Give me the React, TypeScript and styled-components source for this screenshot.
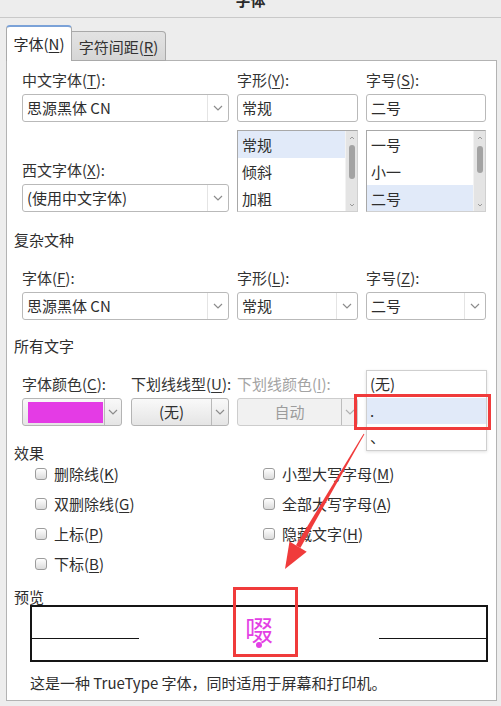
import React from "react";
import styled, { createGlobalStyle } from "styled-components";

const GlobalStyle = createGlobalStyle`
  html, body { margin: 0; padding: 0; }
  body {
    width: 501px; height: 706px; overflow: hidden; background: #ededed;
    font-family: "Noto Sans CJK SC", "Noto Sans", sans-serif;
    font-size: 15px; color: #333;
  }
  * { box-sizing: border-box; }
`;

const Page = styled.div`
  position: relative; width: 501px; height: 706px; overflow: hidden; background: #ededed;
`;

const TitleBar = styled.div`
  height: 18px; border-bottom: 1px solid #c9c9c9; display: flex; justify-content: center;
  align-items: flex-start; overflow: hidden;
`;
const TitleText = styled.div`
  font-weight: 700; font-size: 15px; line-height: 20px; margin-top: -10px; color: #2a2a2a;
`;

const TabBar = styled.div`
  display: flex; align-items: flex-end; margin-top: 7px; padding-left: 6px; height: 36px;
  position: relative; z-index: 1;
`;
const Tab = styled.div<{ $active?: boolean }>`
  display: flex; align-items: center; justify-content: center; white-space: nowrap;
  border: 1px solid #a9a9a9;
  ${(p) =>
    p.$active
      ? `height: 36px; width: 66px; background: #fff; border-bottom: none; border-top: 2px solid #7ba2d8;
         border-radius: 4px 4px 0 0; color: #2a2a2a; padding-bottom: 1px;`
      : `height: 30px; width: 94px; background: linear-gradient(#e3e3e3, #d6d6d6); border-left: none;
         border-radius: 0 4px 0 0; color: #333;`}
`;

const Panel = styled.div`
  margin-left: 6px; margin-top: -1px; width: 491px; height: 641px; background: #fff;
  border: 1px solid #b3b3b3; padding: 9px 0 0 7px;
`;

const SectionHeading = styled.div<{ $mt: number; $lh?: number }>`
  margin-top: ${(p) => p.$mt}px; line-height: ${(p) => p.$lh ?? 20}px; color: #2e2e2e;
`;

const FieldGrid = styled.div<{ $mt?: number }>`
  display: grid; grid-template-columns: 207px 121px 120px; column-gap: 8px;
  margin-left: 8px; margin-top: ${(p) => p.$mt ?? 0}px;
`;

const Column = styled.div`
  display: flex; flex-direction: column; position: relative;
`;

const Label = styled.div<{ $mt?: number; $disabled?: boolean }>`
  line-height: 20px; height: 20px; margin-bottom: 4px; white-space: nowrap;
  margin-top: ${(p) => p.$mt ?? 0}px; color: ${(p) => (p.$disabled ? "#a3a3a3" : "#333")};
`;

const Key = styled.span`
  text-decoration: underline; text-underline-offset: 2px; text-decoration-thickness: 1px;
`;

const Combo = styled.div`
  height: 28px; border: 1px solid #b9b9b9; border-radius: 3px; background: #fff;
  display: flex; align-items: stretch;
`;
const ComboText = styled.div`
  flex: 1; padding-left: 4px; line-height: 26px; white-space: nowrap; overflow: hidden; color: #2e2e2e;
`;
const ComboArrow = styled.div<{ $w?: number; $line?: string }>`
  width: ${(p) => p.$w ?? 21}px; display: flex; align-items: center; justify-content: center;
  border-left: 1px solid ${(p) => p.$line ?? "#e4e4e4"};
`;

const TextBox = styled.div`
  height: 28px; border: 1px solid #b9b9b9; border-radius: 3px; background: #fff;
  padding-left: 4px; line-height: 26px; color: #2e2e2e;
`;

const List = styled.div`
  margin-top: 8px; height: 82px; display: flex; border: 1px solid #a8a8a8;
  border-right-color: #d0d0d0; border-bottom-color: #d0d0d0; background: #fff; overflow: hidden;
`;
const ListItems = styled.div`
  flex: 1; display: flex; flex-direction: column;
`;
const ListItem = styled.div<{ $sel?: boolean }>`
  height: 27px; flex: none; line-height: 27px; padding-left: 4px; color: #2e2e2e;
  background: ${(p) => (p.$sel ? "#e1eaf9" : "transparent")};
`;
const ScrollTrack = styled.div`
  width: 12px; background: #e4e4e4; border-left: 1px solid #f2f2f2; display: flex; flex-direction: column;
  align-items: center; justify-content: space-between; padding: 5px 0 4px;
`;
const ScrollThumb = styled.div<{ $top: number; $h: number }>`
  width: 6px; height: ${(p) => p.$h}px; border-radius: 3px; background: #a3a3a3;
  margin-top: ${(p) => p.$top}px; margin-bottom: auto;
`;

const ButtonRow = styled.div`
  display: flex; gap: 9px;
`;
const SubField = styled.div<{ $w: number }>`
  width: ${(p) => p.$w}px; display: flex; flex-direction: column;
`;
const DropButton = styled.div<{ $disabled?: boolean }>`
  height: 28px; border: 1px solid ${(p) => (p.$disabled ? "#cdcdcd" : "#b4b4b4")}; border-radius: 3px;
  background: ${(p) => (p.$disabled ? "#f1f1f1" : "linear-gradient(#f9f9f9, #e5e5e5)")};
  display: flex; align-items: stretch;
`;
const ButtonFace = styled.div<{ $disabled?: boolean }>`
  flex: 1; display: flex; align-items: center; justify-content: center; line-height: 26px;
  color: ${(p) => (p.$disabled ? "#9c9c9c" : "#2e2e2e")};
`;
const Swatch = styled.div<{ $color: string }>`
  flex: 1; margin: 3px 1px 2px 5px; background: ${(p) => p.$color};
`;

const Popup = styled.div`
  position: absolute; top: -4px; left: 0; width: 121px; height: 81px; background: #fff;
  border: 1px solid #cfcfcf; box-shadow: 0 1px 3px rgba(0,0,0,0.12); z-index: 2;
`;
const PopupItem = styled.div<{ $sel?: boolean }>`
  height: 26.5px; line-height: 26px; padding-left: 3px; color: #2e2e2e;
  background: ${(p) => (p.$sel ? "#e1eaf9" : "transparent")};
`;

const CheckGrid = styled.div`
  display: grid; grid-template-columns: 228px 1fr; grid-auto-rows: 22px; row-gap: 8px;
  padding-left: 21px;
`;
const CheckRow = styled.div`
  display: flex; align-items: center; gap: 7px; white-space: nowrap; color: #2e2e2e;
`;
const CheckBox = styled.div`
  width: 12px; height: 12px; border: 1px solid #9c9c9c; border-radius: 3px;
  background: linear-gradient(#ffffff, #dcdcdc);
`;
const CheckText = styled.span`
  line-height: 22px;
`;

const PreviewBox = styled.div`
  margin-left: 16px; width: 458px; height: 57px; border: 2px solid #151515; display: flex;
`;
const BaseLine = styled.div`
  width: 107px; height: 0; border-top: 1.5px solid #151515; margin-top: 31px; flex: none;
`;
const PreviewCenter = styled.div`
  flex: 1; display: flex; justify-content: center; align-items: flex-start;
`;
const PreviewGlyph = styled.span`
  position: relative; font-size: 28px; line-height: 32px; margin-top: 6px; color: #e340e4;
  &::after {
    content: ""; position: absolute; left: 11px; bottom: -3px; width: 6px; height: 6px;
    border-radius: 50%; background: #e340e4;
  }
`;

const Footer = styled.div`
  margin-top: 11px; margin-left: 16px; line-height: 20px; color: #2e2e2e; white-space: nowrap;
`;

const Overlay = styled.svg`
  position: absolute; top: 0; left: 0; pointer-events: none; z-index: 5;
`;

const Chevron = ({ color = "#8c8c8c" }: { color?: string }) => (
  <svg width="10" height="6" viewBox="0 0 10 6">
    <path d="M1 1 L5 5 L9 1" fill="none" stroke={color} strokeWidth="1.2" />
  </svg>
);

const SmallArrow = ({ up }: { up?: boolean }) => (
  <svg width="6" height="4" viewBox="0 0 6 4">
    <path d={up ? "M1 3 L3 1 L5 3" : "M1 1 L3 3 L5 1"} fill="none" stroke="#9a9a9a" strokeWidth="1" />
  </svg>
);

const ComboField = ({ text }: { text: string }) => (
  <Combo>
    <ComboText>{text}</ComboText>
    <ComboArrow>
      <Chevron />
    </ComboArrow>
  </Combo>
);

const ListBox = ({ items, sel, thumbTop, thumbH }: { items: string[]; sel: number; thumbTop: number; thumbH: number }) => (
  <List>
    <ListItems>
      {items.map((t, i) => (
        <ListItem key={t} $sel={i === sel}>{t}</ListItem>
      ))}
    </ListItems>
    <ScrollTrack>
      <SmallArrow up />
      <ScrollThumb $top={thumbTop} $h={thumbH} />
      <SmallArrow />
    </ScrollTrack>
  </List>
);

const Check = ({ text, k }: { text: string; k: string }) => (
  <CheckRow>
    <CheckBox />
    <CheckText>
      {text}(<Key>{k}</Key>)
    </CheckText>
  </CheckRow>
);

export default function App() {
  return (
    <Page>
      <GlobalStyle />
      <TitleBar>
        <TitleText>字体</TitleText>
      </TitleBar>
      <TabBar>
        <Tab $active><span>字体(<Key>N</Key>)</span></Tab>
        <Tab><span>字符间距(<Key>R</Key>)</span></Tab>
      </TabBar>
      <Panel>
        <FieldGrid>
          <Column>
            <Label>中文字体(<Key>T</Key>):</Label>
            <ComboField text="思源黑体 CN" />
            <Label $mt={38}>西文字体(<Key>X</Key>):</Label>
            <ComboField text="(使用中文字体)" />
          </Column>
          <Column>
            <Label>字形(<Key>Y</Key>):</Label>
            <TextBox>常规</TextBox>
            <ListBox items={["常规", "倾斜", "加粗"]} sel={0} thumbTop={5} thumbH={34} />
          </Column>
          <Column>
            <Label>字号(<Key>S</Key>):</Label>
            <TextBox>二号</TextBox>
            <ListBox items={["一号", "小一", "二号"]} sel={2} thumbTop={6} thumbH={27} />
          </Column>
        </FieldGrid>

        <SectionHeading $mt={18}>复杂文种</SectionHeading>
        <FieldGrid $mt={18}>
          <Column>
            <Label>字体(<Key>F</Key>):</Label>
            <ComboField text="思源黑体 CN" />
          </Column>
          <Column>
            <Label>字形(<Key>L</Key>):</Label>
            <ComboField text="常规" />
          </Column>
          <Column>
            <Label>字号(<Key>Z</Key>):</Label>
            <ComboField text="二号" />
          </Column>
        </FieldGrid>

        <SectionHeading $mt={16}>所有文字</SectionHeading>
        <FieldGrid $mt={18}>
          <Column>
            <ButtonRow>
              <SubField $w={100}>
                <Label>字体颜色(<Key>C</Key>):</Label>
                <DropButton>
                  <Swatch $color="#e43be5" />
                  <ComboArrow $w={17} $line="#b9b9b9">
                    <Chevron />
                  </ComboArrow>
                </DropButton>
              </SubField>
              <SubField $w={98}>
                <Label>下划线线型(<Key>U</Key>):</Label>
                <DropButton>
                  <ButtonFace>(无)</ButtonFace>
                  <ComboArrow $w={17} $line="#b9b9b9">
                    <Chevron />
                  </ComboArrow>
                </DropButton>
              </SubField>
            </ButtonRow>
          </Column>
          <Column>
            <Label $disabled>下划线颜色(<Key>I</Key>):</Label>
            <DropButton $disabled>
              <ButtonFace $disabled>自动</ButtonFace>
              <ComboArrow $w={16} $line="#bdbdbd">
                <Chevron color="#b0b0b0" />
              </ComboArrow>
            </DropButton>
          </Column>
          <Column>
            <Popup>
              <PopupItem>(无)</PopupItem>
              <PopupItem $sel>.</PopupItem>
              <PopupItem>、</PopupItem>
            </Popup>
          </Column>
        </FieldGrid>

        <SectionHeading $mt={17}>效果</SectionHeading>
        <CheckGrid>
          <Check text="删除线" k="K" />
          <Check text="小型大写字母" k="M" />
          <Check text="双删除线" k="G" />
          <Check text="全部大写字母" k="A" />
          <Check text="上标" k="P" />
          <Check text="隐藏文字" k="H" />
          <Check text="下标" k="B" />
        </CheckGrid>

        <SectionHeading $mt={14} $lh={16}>预览</SectionHeading>
        <PreviewBox>
          <BaseLine />
          <PreviewCenter>
            <PreviewGlyph>啜</PreviewGlyph>
          </PreviewCenter>
          <BaseLine />
        </PreviewBox>
        <Footer>这是一种 TrueType 字体，同时适用于屏幕和打印机。</Footer>
      </Panel>

      <Overlay width="501" height="706" viewBox="0 0 501 706">
        <rect x="355.5" y="395.5" width="134" height="33" fill="none" stroke="#f03b3b" strokeWidth="3" />
        <rect x="234.5" y="588.5" width="62" height="67" fill="none" stroke="#f03b3b" strokeWidth="3" />
        <polygon points="364.4,434.3 363.6,433.7 295.9,545.3 300.3,547.9" fill="#f03b3b" />
        <polygon points="285,569 289.5,541.5 306.7,551.7" fill="#f03b3b" />
      </Overlay>
    </Page>
  );
}
